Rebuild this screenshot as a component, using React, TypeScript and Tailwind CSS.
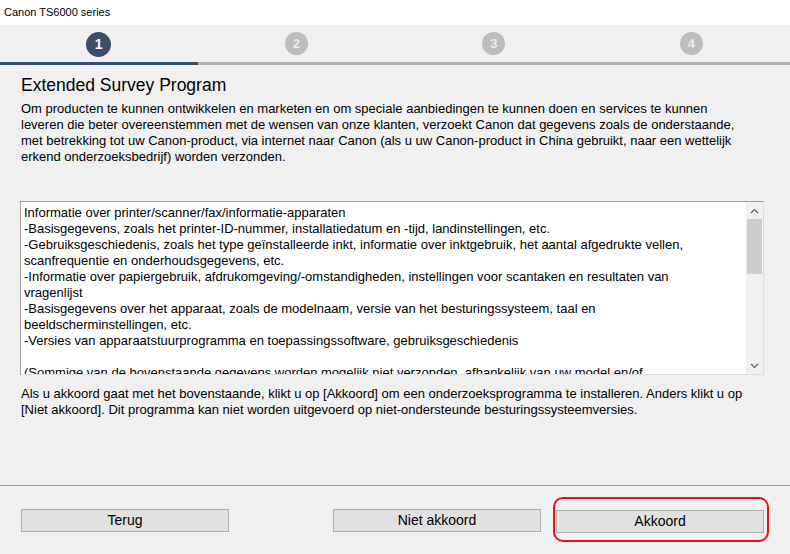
const boxLines = [
  "Informatie over printer/scanner/fax/informatie-apparaten",
  "-Basisgegevens, zoals het printer-ID-nummer, installatiedatum en -tijd, landinstellingen, etc.",
  "-Gebruiksgeschiedenis, zoals het type geïnstalleerde inkt, informatie over inktgebruik, het aantal afgedrukte vellen,",
  "scanfrequentie en onderhoudsgegevens, etc.",
  "-Informatie over papiergebruik, afdrukomgeving/-omstandigheden, instellingen voor scantaken en resultaten van",
  "vragenlijst",
  "-Basisgegevens over het apparaat, zoals de modelnaam, versie van het besturingssysteem, taal en",
  "beeldscherminstellingen, etc.",
  "-Versies van apparaatstuurprogramma en toepassingssoftware, gebruiksgeschiedenis",
  "\u00a0",
  "(Sommige van de bovenstaande gegevens worden mogelijk niet verzonden, afhankelijk van uw model en/of",
];

const introLines = [
  "Om producten te kunnen ontwikkelen en marketen en om speciale aanbiedingen te kunnen doen en services te kunnen",
  "leveren die beter overeenstemmen met de wensen van onze klanten, verzoekt Canon dat gegevens zoals de onderstaande,",
  "met betrekking tot uw Canon-product, via internet naar Canon (als u uw Canon-product in China gebruikt, naar een wettelijk",
  "erkend onderzoeksbedrijf) worden verzonden.",
];

const noteLines = [
  "Als u akkoord gaat met het bovenstaande, klikt u op [Akkoord] om een onderzoeksprogramma te installeren. Anders klikt u op",
  "[Niet akkoord]. Dit programma kan niet worden uitgevoerd op niet-ondersteunde besturingssysteemversies.",
];

function Step({ n, active }: { n: number; active?: boolean }) {
  return (
    <div className="flex justify-center">
      {active ? (
        <div className="flex h-[25px] w-[25px] items-center justify-center rounded-full bg-[#3b4d6d] text-[14px] font-bold text-white">
          {n}
        </div>
      ) : (
        <div className="flex h-[23px] w-[23px] items-center justify-center rounded-full bg-[#bdbdbd] text-[13px] font-bold text-[#ececec]">
          {n}
        </div>
      )}
    </div>
  );
}

function Chevron({ up }: { up?: boolean }) {
  return (
    <svg width="9" height="6" viewBox="0 0 9 6" className="text-[#606060]">
      <path
        d={up ? "M1 5 L4.5 1.5 L8 5" : "M1 1 L4.5 4.5 L8 1"}
        fill="none"
        stroke="currentColor"
        strokeWidth="1.2"
      />
    </svg>
  );
}

export default function App() {
  return (
    <div className="flex h-[554px] w-[790px] flex-col overflow-hidden bg-[#f0f0f0] font-['Liberation_Sans',Arial,sans-serif] text-black">
      <div className="flex h-[25px] items-center bg-white pl-[4px] text-[11px]">Canon TS6000 series</div>

      <div className="grid h-[37px] grid-cols-4 items-start pt-[7px]">
        <Step n={1} active />
        <Step n={2} />
        <Step n={3} />
        <Step n={4} />
      </div>
      <div className="flex h-[3px]">
        <div className="w-[198px] bg-[#3b4d6d]" />
        <div className="flex-1 bg-[#b0b0b0]" />
      </div>

      <div className="px-[21px]">
        <h1 className="mt-[10px] text-[17.5px] leading-[20px]">Extended Survey Program</h1>
        <div className="mt-[6px] text-[13px] leading-[16px]">
          {introLines.map((l) => (
            <div key={l} className="whitespace-nowrap">
              {l}
            </div>
          ))}
        </div>
      </div>

      <div className="mx-[20px] mt-[36px] flex h-[174px] w-[744px] border-t border-l border-t-[#a0a0a0] border-l-[#a0a0a0] border-r border-b border-r-[#dcdcdc] border-b-[#dcdcdc] bg-white">
        <div className="flex-1 overflow-hidden pl-[3px] pt-[3px] text-[13px] leading-[16px]">
          {boxLines.map((l, i) => (
            <div key={i} className="whitespace-nowrap">
              {l}
            </div>
          ))}
        </div>
        <div className="flex w-[17px] flex-col items-center bg-[#f0f0f0]">
          <div className="flex h-[17px] items-center justify-center">
            <Chevron up />
          </div>
          <div className="h-[55px] w-[15px] bg-[#cdcdcd]" />
          <div className="flex-1" />
          <div className="flex h-[17px] items-center justify-center">
            <Chevron />
          </div>
        </div>
      </div>

      <div className="mt-[11px] px-[21px] text-[13px] leading-[16px]">
        {noteLines.map((l) => (
          <div key={l} className="whitespace-nowrap">
            {l}
          </div>
        ))}
      </div>

      <div className="mt-auto h-[69px] border-t border-[#a0a0a0]">
        <div className="flex pl-[21px] pt-[23px]">
          <button className="h-[23px] w-[208px] border border-[#adadad] bg-[#e1e1e1] text-[14px]">Terug</button>
          <button className="ml-[104px] h-[23px] w-[208px] border border-[#adadad] bg-[#e1e1e1] text-[14px]">
            Niet akkoord
          </button>
          <div className="relative ml-[15px]">
            <button className="h-[23px] w-[208px] border border-[#adadad] bg-[#e1e1e1] text-[14px]">Akkoord</button>
            <div className="pointer-events-none absolute -bottom-[9px] -left-[3px] -right-[5px] -top-[12px] rounded-[10px] border-2 border-[#e8101a]" />
          </div>
        </div>
      </div>
    </div>
  );
}
